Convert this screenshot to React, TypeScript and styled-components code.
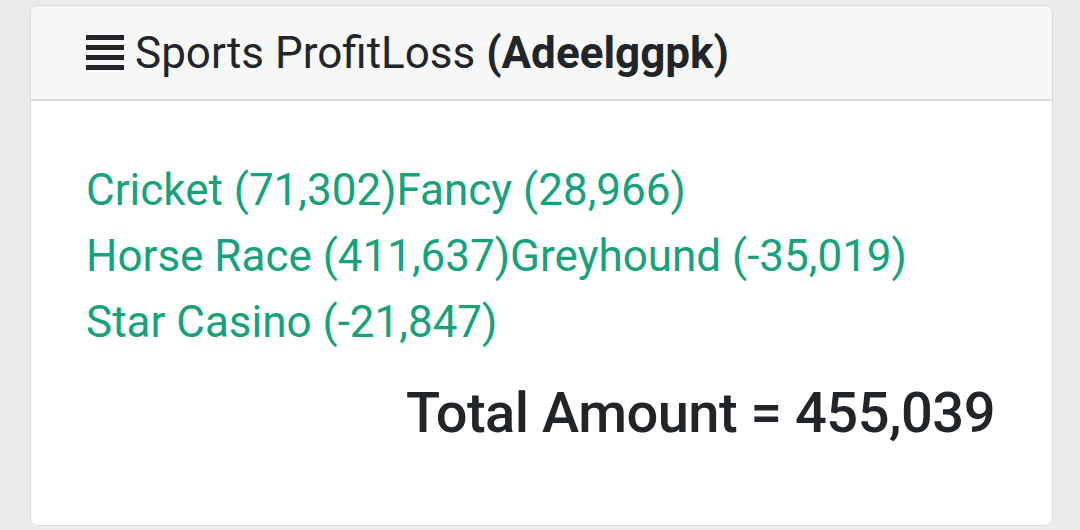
import styled, { createGlobalStyle } from "styled-components";

const Global = createGlobalStyle`
    html, body {
        margin: 0;
        padding: 0;
        background: #ebebeb;
        font-family: Roboto, "Liberation Sans", sans-serif;
    }
`

type SportType = {
    name: string,
    amount: string
}

const rows: SportType[][] = [
    [{ name: "Cricket", amount: "71,302" }, { name: "Fancy", amount: "28,966" }],
    [{ name: "Horse Race", amount: "411,637" }, { name: "Greyhound", amount: "-35,019" }],
    [{ name: "Star Casino", amount: "-21,847" }],
]

const MenuIcon = () => (
    <svg width="38" height="38" viewBox="0 0 38 38">
        <rect x="0" y="1" width="38" height="5" fill="#212529" />
        <rect x="0" y="11" width="38" height="5" fill="#212529" />
        <rect x="0" y="21" width="38" height="5" fill="#212529" />
        <rect x="0" y="31" width="38" height="5" fill="#212529" />
    </svg>
)

export default function App() {
    return (
        <Page>
            <Global />
            <Card>
                <Header>
                    <MenuIcon />
                    <Title>Sports ProfitLoss <b>(Adeelggpk)</b></Title>
                </Header>
                <Body>
                    <List>
                        {rows.map((row, i) => (
                            <Line key={i}>
                                {row.map((s) => (
                                    <span key={s.name}>{s.name} ({s.amount})</span>
                                ))}
                            </Line>
                        ))}
                    </List>
                    <Total>Total Amount = 455,039</Total>
                </Body>
            </Card>
        </Page>
    );
}

const Page = styled.div`
    width: 1080px;
    height: 530px;
    padding: 5px 27px 6px 30px;
    box-sizing: border-box;
`

const Card = styled.div`
    height: 519px;
    background: #fff;
    border: 1px solid #dcdcdc;
    border-radius: 8px;
    overflow: hidden;
    display: flex;
    flex-direction: column;
`

const Header = styled.div`
    height: 95px;
    box-sizing: border-box;
    background: #f7f7f7;
    border-bottom: 2px solid #dcdcdc;
    display: flex;
    align-items: center;
    gap: 11px;
    padding-left: 55px;
`

const Title = styled.h3`
    margin: 0;
    font-size: 44px;
    font-weight: 400;
    color: #212529;

    b {
        font-weight: 700;
    }
`

const Body = styled.div`
    padding: 56px 57px 0 55px;
    display: flex;
    flex-direction: column;
`

const List = styled.div`
    color: #16a27b;
    font-size: 44px;
    line-height: 66px;
`

const Line = styled.div``

const Total = styled.div`
    margin-top: 25px;
    align-self: flex-end;
    font-size: 56px;
    font-weight: 500;
    color: #212529;
    letter-spacing: -0.5px;
`
